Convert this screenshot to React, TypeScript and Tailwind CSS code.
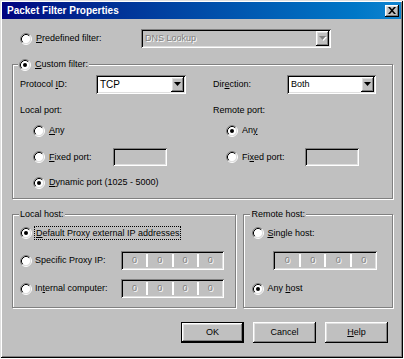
import React from "react";

const sunken =
  "shadow-[inset_1px_1px_0_#808080,inset_-1px_-1px_0_#ffffff,inset_2px_2px_0_#000000,inset_-2px_-2px_0_#dfdfdf]";
const raised =
  "shadow-[inset_-1px_-1px_0_#000000,inset_1px_1px_0_#ffffff,inset_-2px_-2px_0_#808080,inset_2px_2px_0_#dfdfdf]";
const etched =
  "border border-[#808080] shadow-[inset_1px_1px_0_#ffffff,1px_1px_0_#ffffff]";
const dis = "text-[#808080] [text-shadow:1px_1px_0_#ffffff]";

function Radio({ checked = false }: { checked?: boolean }) {
  return (
    <svg width="12" height="12" viewBox="0 0 12 12" className="shrink-0">
      <circle cx="6" cy="6" r="4.5" fill="#ffffff" />
      <path d="M2.11 9.89 A5.5 5.5 0 0 1 9.89 2.11" stroke="#808080" strokeWidth="1" fill="none" />
      <path d="M9.89 2.11 A5.5 5.5 0 0 1 2.11 9.89" stroke="#ffffff" strokeWidth="1" fill="none" />
      <path d="M2.82 9.18 A4.5 4.5 0 0 1 9.18 2.82" stroke="#000000" strokeWidth="1" fill="none" />
      <path d="M9.18 2.82 A4.5 4.5 0 0 1 2.82 9.18" stroke="#dfdfdf" strokeWidth="1" fill="none" />
      {checked && <circle cx="6" cy="6" r="2" fill="#000000" />}
    </svg>
  );
}

function Arrow({ disabled = false }: { disabled?: boolean }) {
  return (
    <svg width="8" height="5" viewBox="0 0 8 5">
      {disabled && <polygon points="1,1 8,1 4.5,5" fill="#ffffff" />}
      <polygon points="0,0 7,0 3.5,4" fill={disabled ? "#808080" : "#000000"} />
    </svg>
  );
}

function Combo({
  text,
  w,
  disabled = false,
  big = false,
}: {
  text: string;
  w: string;
  disabled?: boolean;
  big?: boolean;
}) {
  return (
    <div
      className={`${w} h-[19px] p-[2px] flex items-stretch ${sunken} ${
        disabled ? "bg-[#c0c0c0]" : "bg-white"
      }`}
    >
      <div
        className={`flex-1 flex items-center pl-[2px] ${big ? "text-[10px]" : ""} ${
          disabled ? dis : ""
        }`}
      >
        {text}
      </div>
      <div className={`w-[13px] bg-[#c0c0c0] flex items-center justify-center ${raised}`}>
        <Arrow disabled={disabled} />
      </div>
    </div>
  );
}

function IpBox({ w }: { w: string }) {
  return (
    <div className={`${w} h-[19px] p-[2px] flex bg-[#c0c0c0] ${sunken}`}>
      {[0, 1, 2, 3].map((i) => (
        <React.Fragment key={i}>
          {i > 0 && <div className="w-[2px] bg-white my-[1px]" />}
          <div className={`flex-1 flex items-center justify-center ${dis}`}>0</div>
        </React.Fragment>
      ))}
    </div>
  );
}

function TextBox() {
  return <div className={`w-[54px] h-[18px] bg-[#c0c0c0] ${sunken}`} />;
}

function U({ children }: { children: React.ReactNode }) {
  return <span className="underline underline-offset-[1px]">{children}</span>;
}

function Button({
  children,
  def = false,
}: {
  children: React.ReactNode;
  def?: boolean;
}) {
  return (
    <div
      className={`w-[63px] h-[21px] flex ${def ? "border border-black" : ""}`}
    >
      <div className={`flex-1 flex items-center justify-center bg-[#c0c0c0] ${raised}`}>
        {children}
      </div>
    </div>
  );
}

export default function App() {
  return (
    <div className="w-[404px] h-[359px] bg-white">
      <div
        className={`w-[403px] h-[358px] bg-[#c0c0c0] p-[2px] flex flex-col text-[9px] leading-[11px] text-black font-['Liberation_Sans',Arial,sans-serif] shadow-[inset_1px_1px_0_#dfdfdf,inset_-1px_-1px_0_#000000,inset_2px_2px_0_#ffffff,inset_-2px_-2px_0_#808080]`}
      >
        {/* Title bar */}
        <div className="h-[17px] flex items-center justify-between pl-[5px] pr-[2px] bg-linear-to-r from-[#000080] to-[#1084d0]">
          <span className="text-white font-bold text-[10px]">Packet Filter Properties</span>
          <div className={`w-[14px] h-[12px] bg-[#c0c0c0] flex items-center justify-center ${raised}`}>
            <svg width="8" height="7" viewBox="0 0 8 7">
              <path
                d="M0 0 L2 0 L4 2.3 L6 0 L8 0 L5 3.5 L8 7 L6 7 L4 4.7 L2 7 L0 7 L3 3.5 Z"
                fill="#000000"
              />
            </svg>
          </div>
        </div>

        <div className="flex flex-col pl-[10px] w-[391px]">
          {/* Predefined filter */}
          <div className="mt-[10px] h-[19px] flex items-center pl-[8px]">
            <Radio />
            <span className="ml-[4px] w-[105px]">
              <U>P</U>redefined filter:
            </span>
            <Combo text="DNS Lookup" w="w-[190px]" disabled />
          </div>

          {/* Custom filter */}
          <fieldset className={`mt-[10px] w-[381px] ${etched} px-[7px] pb-[9px]`}>
            <legend className="ml-[-2px] px-[1px] h-[13px] flex items-center bg-[#c0c0c0]">
              <Radio checked />
              <span className="ml-[4px]">
                <U>C</U>ustom filter:
              </span>
            </legend>
            <div className="flex">
              <div className="w-[193px] flex flex-col">
                <div className="mt-[4px] h-[19px] flex items-center">
                  <span className="w-[76px]">
                    Protocol <U>I</U>D:
                  </span>
                  <Combo text="TCP" w="w-[90px]" big />
                </div>
                <div className="mt-[11px] h-[11px]">Local port:</div>
                <div className="mt-[8px] h-[13px] pl-[13px] flex items-center">
                  <Radio />
                  <span className="ml-[4px]">
                    <U>A</U>ny
                  </span>
                </div>
                <div className="mt-[11px] h-[18px] pl-[13px] flex items-center">
                  <Radio />
                  <span className="ml-[4px] w-[64px]">
                    <U>F</U>ixed port:
                  </span>
                  <TextBox />
                </div>
                <div className="mt-[10px] h-[13px] pl-[13px] flex items-center">
                  <Radio checked />
                  <span className="ml-[4px]">
                    <U>D</U>ynamic port (1025 - 5000)
                  </span>
                </div>
              </div>
              <div className="flex-1 flex flex-col">
                <div className="mt-[4px] h-[19px] flex items-center">
                  <span className="w-[74px]">
                    Dir<U>e</U>ction:
                  </span>
                  <Combo text="Both" w="w-[89px]" />
                </div>
                <div className="mt-[11px] h-[11px]">Remote port:</div>
                <div className="mt-[8px] h-[13px] pl-[13px] flex items-center">
                  <Radio checked />
                  <span className="ml-[4px]">
                    An<U>y</U>
                  </span>
                </div>
                <div className="mt-[11px] h-[18px] pl-[13px] flex items-center">
                  <Radio />
                  <span className="ml-[4px] w-[63px]">
                    Fi<U>x</U>ed port:
                  </span>
                  <TextBox />
                </div>
              </div>
            </div>
          </fieldset>

          {/* Hosts */}
          <div className="mt-[9px] flex items-stretch">
            <fieldset className={`w-[225px] ${etched} px-[7px] pb-[9px]`}>
              <legend className="ml-[-1px] px-[1px] h-[12px] flex items-center bg-[#c0c0c0]">
                Local host:
              </legend>
              <div className="mt-[6px] h-[14px] flex items-center">
                <Radio checked />
                <span className="ml-[2px] h-[14px] px-[1px] flex items-center border border-dotted border-black">
                  <U>D</U>efault Proxy external IP addresses
                </span>
              </div>
              <div className="mt-[11px] h-[19px] flex items-center">
                <Radio />
                <span className="ml-[3px] w-[86px]">Specific Proxy IP:</span>
                <IpBox w="w-[103px]" />
              </div>
              <div className="mt-[9px] h-[19px] flex items-center">
                <Radio />
                <span className="ml-[3px] w-[86px]">
                  In<U>t</U>ernal computer:
                </span>
                <IpBox w="w-[103px]" />
              </div>
            </fieldset>
            <fieldset className={`ml-[7px] w-[150px] ${etched} px-[7px] pb-[9px]`}>
              <legend className="ml-[-1px] px-[1px] h-[12px] flex items-center bg-[#c0c0c0]">
                Remote host:
              </legend>
              <div className="mt-[6px] h-[14px] pl-[1px] flex items-center">
                <Radio />
                <span className="ml-[3px]">
                  <U>S</U>ingle host:
                </span>
              </div>
              <div className="mt-[11px] h-[19px] pl-[22px] flex items-center">
                <IpBox w="w-[104px]" />
              </div>
              <div className="mt-[9px] h-[19px] pl-[1px] flex items-center">
                <Radio checked />
                <span className="ml-[3px]">
                  Any <U>h</U>ost
                </span>
              </div>
            </fieldset>
          </div>

          {/* Buttons */}
          <div className="mt-[14px] w-[381px] pr-[5px] flex justify-end gap-[9px]">
            <Button def>OK</Button>
            <Button>Cancel</Button>
            <Button>
              <span>
                <U>H</U>elp
              </span>
            </Button>
          </div>
        </div>
      </div>
    </div>
  );
}
